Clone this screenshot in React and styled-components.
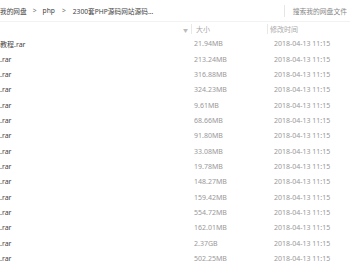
import React from 'react';
import styled, { createGlobalStyle } from 'styled-components';

const GlobalStyle = createGlobalStyle`
  html, body {
    margin: 0;
    padding: 0;
    background: #fff;
  }
  body {
    font-family: "Noto Sans", "Noto Sans CJK SC", sans-serif;
    font-size: 7px;
    color: #666;
  }
`;

const Page = styled.div`
  width: 350px;
  height: 280px;
  overflow: hidden;
  background: #fff;
`;

const Header = styled.div`
  display: flex;
  align-items: center;
  justify-content: space-between;
  height: 21px;
  border-bottom: 1px solid #f2f2f2;
`;

const Crumbs = styled.div`
  display: flex;
  align-items: center;
  font-size: 6.7px;
`;

const Crumb = styled.span`
  color: #444;
`;

const Arrow = styled.span`
  color: #777;
  margin: 0 ${p => p.$gap || 6}px;
`;

const Search = styled.div`
  display: flex;
  align-items: center;
  height: 12px;
  padding-left: 8px;
  padding-right: 3px;
  border-left: 1px solid #e6e6e6;
  color: #888;
  font-size: 6.8px;
`;

const Columns = styled.div`
  display: grid;
  grid-template-columns: 191px 76px 1fr;
  height: 14px;
  align-items: center;
  color: #aaa;
`;

const HeadCell = styled.div`
  display: flex;
  align-items: center;
  height: 10px;
  padding-left: ${p => p.$pad || 4}px;
  border-left: ${p => (p.$line ? '1px solid #e8e8e8' : 'none')};
  justify-content: ${p => (p.$end ? 'flex-end' : 'flex-start')};
  padding-right: ${p => (p.$end ? 3 : 0)}px;
`;

const Caret = styled.span`
  font-size: 5px;
  color: #bbb;
`;

const Row = styled.div`
  display: grid;
  grid-template-columns: 191px 76px 1fr;
  height: 15.36px;
  align-items: center;
`;

const Name = styled.div`
  color: #444;
  white-space: nowrap;
  overflow: hidden;
`;

const Size = styled.div`
  padding-left: 3px;
  color: #999;
`;

const Time = styled.div`
  padding-left: 7px;
  color: #999;
`;

const files = [
  ['教程.rar', '21.94MB'],
  ['.rar', '213.24MB'],
  ['.rar', '316.88MB'],
  ['.rar', '324.23MB'],
  ['.rar', '9.61MB'],
  ['.rar', '68.66MB'],
  ['.rar', '91.80MB'],
  ['.rar', '33.08MB'],
  ['.rar', '19.78MB'],
  ['.rar', '148.27MB'],
  ['.rar', '159.42MB'],
  ['.rar', '554.72MB'],
  ['.rar', '162.01MB'],
  ['.rar', '2.37GB'],
  ['.rar', '502.25MB'],
];

export default function App() {
  return (
    <Page>
      <GlobalStyle />
      <Header>
        <Crumbs>
          <Crumb>我的网盘</Crumb>
          <Arrow>&gt;</Arrow>
          <Crumb>php</Crumb>
          <Arrow $gap={7}>&gt;</Arrow>
          <Crumb>2300套PHP源码网站源码...</Crumb>
        </Crumbs>
        <Search>搜索我的网盘文件</Search>
      </Header>
      <Columns>
        <HeadCell $end>
          <Caret>▼</Caret>
        </HeadCell>
        <HeadCell $line>大小</HeadCell>
        <HeadCell $line $pad={2}>修改时间</HeadCell>
      </Columns>
      {files.map(([name, size], i) => (
        <Row key={i}>
          <Name>{name}</Name>
          <Size>{size}</Size>
          <Time>2018-04-13 11:15</Time>
        </Row>
      ))}
    </Page>
  );
}
